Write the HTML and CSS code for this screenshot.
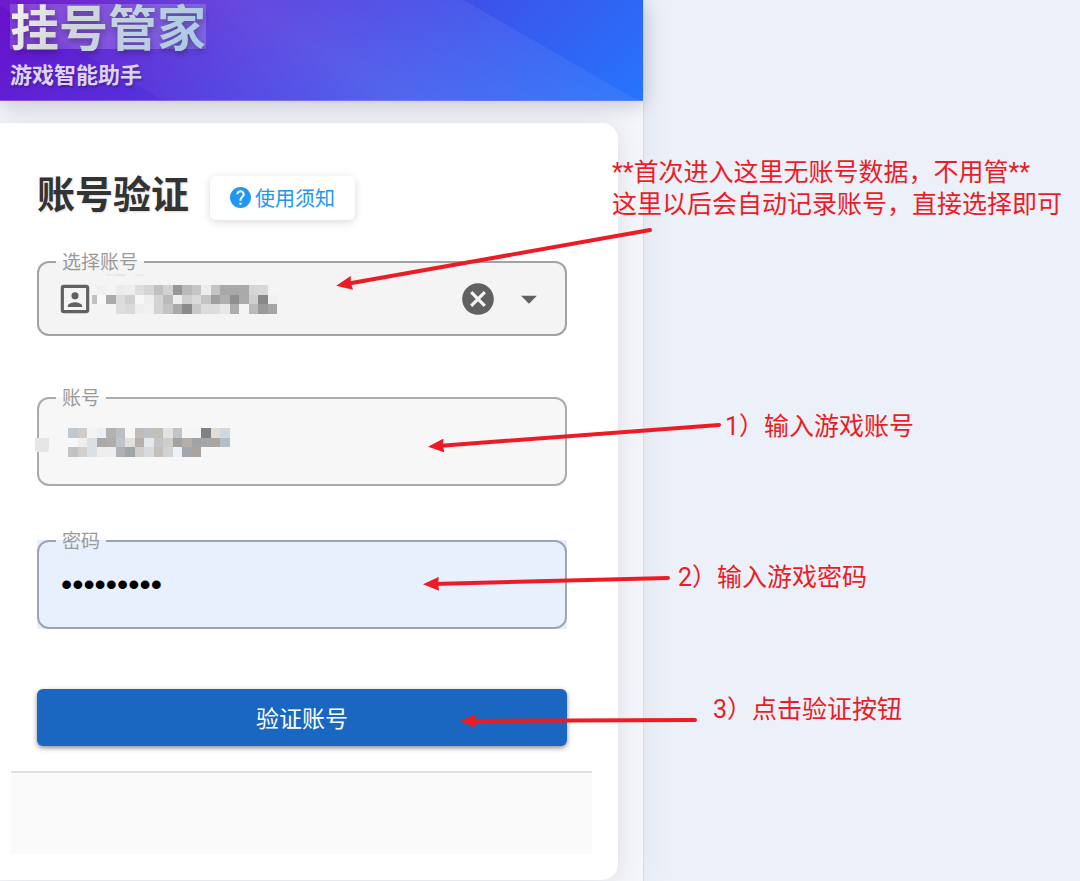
FILE: index.html
```html
<!DOCTYPE html>
<html lang="zh-CN">
<head>
    <meta charset="UTF-8">
    <meta name="viewport" content="width=device-width, initial-scale=1.0">
    <title>挂号管家</title>
    <link rel="stylesheet" href="styles.css">
</head>
<body>
    <div class="panel">
        <header class="header">
            <h1 class="brand"><span class="brand-text">挂号管家</span></h1>
            <p class="tagline">游戏智能助手</p>
        </header>

        <main class="card">
            <form class="form">
                <div class="title-row">
                    <h2 class="title">账号验证</h2>
                    <button type="button" class="notice">
                        <svg class="notice-icon" viewBox="0 0 20 20" aria-hidden="true">
                            <path fill="currentColor" d="M10 0C4.48 0 0 4.48 0 10s4.48 10 10 10 10-4.48 10-10S15.52 0 10 0zm1 17H9v-2h2v2zm2.07-7.75l-.9.92C11.45 10.9 11 11.5 11 13H9v-.5c0-1.1.45-2.1 1.17-2.83l1.24-1.26c.37-.36.59-.86.59-1.41 0-1.1-.9-2-2-2s-2 .9-2 2H6c0-2.21 1.79-4 4-4s4 1.79 4 4c0 .88-.36 1.68-.93 2.25z"/>
                        </svg>
                        使用须知
                    </button>
                </div>

                <div class="field field-select">
                    <label class="field-label" for="saved">选择账号</label>
                    <div class="field-box">
                        <svg class="icon" viewBox="0 0 24 24" aria-hidden="true">
                            <path fill="currentColor" d="M19 19H5V5h14m0-2H5a2 2 0 0 0-2 2v14a2 2 0 0 0 2 2h14a2 2 0 0 0 2-2V5a2 2 0 0 0-2-2m-2.500 13.250c0-1.500-3-2.250-4.500-2.250s-4.500.75-4.500 2.250V17h9M12 12.250A2.250 2.250 0 0 0 14.250 10 2.250 2.250 0 0 0 12 7.750 2.250 2.250 0 0 0 9.750 10 2.250 2.250 0 0 0 12 12.250"/>
                        </svg>
                        <select id="saved" class="control">
                            <option value=""></option>
                        </select>
                        <button type="button" class="clear" aria-label="清除">
                            <svg class="icon" viewBox="0 0 24 24" aria-hidden="true">
                                <path fill="currentColor" d="M12 2C6.470 2 2 6.470 2 12s4.470 10 10 10 10-4.470 10-10S17.530 2 12 2zm5 13.590L15.590 17 12 13.410 8.410 17 7 15.590 10.590 12 7 8.410 8.410 7 12 10.590 15.590 7 17 8.410 13.410 12 17 15.590z"/>
                            </svg>
                        </button>
                        <svg class="icon" viewBox="0 0 24 24" aria-hidden="true">
                            <path fill="currentColor" d="M7 10l5 5 5-5z"/>
                        </svg>
                    </div>
                    <svg class="mosaic mosaic-saved" viewBox="0 0 20 5" aria-hidden="true">
                        <rect x="0.5" y="3" width="0.5" height="1" fill="#c0c0c0"/>
                    </svg>
                </div>

                <div class="field field-account">
                    <label class="field-label" for="account">账号</label>
                    <div class="field-box">
                        <input id="account" class="control" type="text" autocomplete="off">
                    </div>
                    <svg class="mosaic mosaic-account" viewBox="0 0 21 3" aria-hidden="true">
                        <rect x="0.5" y="1" width="1.5" height="1.5" rx="0.3" fill="#e6e6e6"/>
                    </svg>
                </div>

                <div class="field field-password">
                    <label class="field-label" for="password">密码</label>
                    <div class="field-box">
                        <input id="password" class="control" type="password" value="abcdefghi" autocomplete="off">
                    </div>
                </div>

                <button type="button" class="submit">验证账号</button>
            </form>
            <div class="result"></div>
        </main>
    </div>

    <!-- guide arrows and notes on top of the page -->
    <div class="guide">
        <svg class="arrows" viewBox="0 0 1080 881" aria-hidden="true">
            <defs>
                <marker id="head" markerUnits="userSpaceOnUse" markerWidth="16" markerHeight="14" refX="6" refY="7" orient="auto">
                    <path d="M0 0L16 7L0 14L1 7z" fill="#ed1c24"/>
                </marker>
            </defs>
            <g stroke="#ed1c24" stroke-width="4" stroke-linecap="round">
                <line x1="650" y1="230" x2="346" y2="284" marker-end="url(#head)"/>
                <line x1="719" y1="425" x2="438" y2="446" marker-end="url(#head)"/>
                <line x1="668" y1="578" x2="433" y2="584" marker-end="url(#head)"/>
                <line x1="695" y1="720" x2="470" y2="721" marker-end="url(#head)"/>
            </g>
        </svg>
        <p class="note note-saved">**首次进入这里无账号数据，不用管**<br>这里以后会自动记录账号，直接选择即可</p>
        <p class="note note-account">1）输入游戏账号</p>
        <p class="note note-password">2）输入游戏密码</p>
        <p class="note note-submit">3）点击验证按钮</p>
    </div>

    <script>
        // one colour per cell, "-" leaves the cell empty
        const saved = [
            "- - ececec e4e4e4 - ebebeb - - - - - - - - - - - - - -",
            "- - - - - - - - - - - - - - - - - - - -",
            "- f0f0f0 - ebebeb eeeeee dddddd d5d5d5 c0c0c0 d2d2d2 979797 b9b9b9 c6c6c6 ededed c4c4c4 a8a8a8 a8a8a8 a9a9a9 d5d5d5 d8d8d8 -",
            "- f8f8f8 aaaaaa dbdbdb cfcfcf f7f7f7 eeeeee d3d3d3 bababa eeeeee cfcfcf dadada c4c4c4 a0a0a0 b0b0b0 8f8f8f ababab cfcfcf 888888 f0f0f0",
            "- - - dddddd dadada eeeeee f0f0f0 d3d3d3 c3c3c3 a9a9a9 8a8a8a c8c8c8 dcdcdc dddddd e8e8e8 adadad f4f4f4 bababa 999999 a5a5a5"
        ];
        const account = [
            "- - - - bfc7cf d0ccca f4f4f4 eaf0f8 b4b2af bcbec1 f4f6f7 c0bbb8 bcc2c5 c2beb8 e2e2e0 c2c4c6 f5f7f7 f5f5f5 808184 e2ddd8 cfd7df",
            "- - - - f8f8f8 f0eeed dae0e5 aaaaaa b0aeab c1c4c8 e3e1dc b5b0ac e4e8eb c3c5c8 cecdcb a2a2a2 b3aea9 a1a2a3 a6a7a8 aba5a0 b5bec8",
            "- - - - c3c3c2 d2d0ce dbe0e4 eeeeee eeeeee b0b1b5 a0a5a7 d0cfcd d9dadd c6c0bc d0d3d6 eef0f4 a1a7ad aaa49e - - -"
        ];

        function drawMosaic(selector, rows) {
            const svg = document.querySelector(selector);
            rows.forEach((row, y) => {
                row.split(" ").forEach((color, x) => {
                    if (color === "-") return;
                    const cell = document.createElementNS("http://www.w3.org/2000/svg", "rect");
                    cell.setAttribute("x", x);
                    cell.setAttribute("y", y);
                    cell.setAttribute("width", 1);
                    cell.setAttribute("height", 1);
                    cell.setAttribute("fill", "#" + color);
                    svg.appendChild(cell);
                });
            });
        }

        drawMosaic(".mosaic-saved", saved);
        drawMosaic(".mosaic-account", account);
    </script>
</body>
</html>
```
FILE: styles.css
```css
* {
    box-sizing: border-box;
}
body {
    margin: 0;
    min-height: 100vh;
    display: grid;
    grid-template-columns: 644fr 436fr;
    position: relative;
    overflow: hidden;
    background: #ecf0f9;
    font-family: "Noto Sans CJK SC", sans-serif;
}
h1, h2, p {
    margin: 0;
}
button, input, select {
    font-family: inherit;
}
.panel {
    background: #f4f6fb;
    border-right: 1px solid #d9dbe0;
    box-shadow: 0 0 32px rgba(0, 0, 0, 0.06);
}

/* header */
.header {
    padding: 4px 10px 12px;
    position: relative;
    background:
        linear-gradient(30deg, transparent 20%, rgba(255, 255, 255, 0.04) 20%, rgba(255, 255, 255, 0.11) 50%, rgba(255, 255, 255, 0.06) 78%, transparent 78%),
        linear-gradient(135deg, #6a11cb, #2575fc);
    border-bottom: 1px solid rgba(255, 255, 255, 0.2);
    box-shadow: 0 4px 20px rgba(0, 0, 0, 0.2);
}
.brand {
    width: fit-content;
    padding-bottom: 3px;
    font-size: 49px;
    line-height: 42px;
    background: rgba(255, 255, 255, 0.18);
}
.brand-text {
    color: transparent;
    background: linear-gradient(120deg, #f8f8f8, #d4d8d8 30%, #a4c8e6);
    -webkit-background-clip: text;
    background-clip: text;
    filter: drop-shadow(1px 3px 3px rgba(0, 0, 0, 0.3));
}
.tagline {
    margin-top: 9px;
    font-size: 22px;
    line-height: 30px;
    font-weight: bold;
    color: #dcd4f4;
    text-shadow: 1px 2px 2px rgba(0, 0, 0, 0.25);
}

/* card */
.card {
    margin: 22px 25px 0 0;
    padding-bottom: 26px;
    background: #fff;
    border-radius: 0 16px 16px 0;
    box-shadow: 0 2px 28px rgba(0, 0, 0, 0.1);
}
.form {
    padding: 44px 51px 25px 37px;
}
.title-row {
    display: flex;
    align-items: flex-end;
    gap: 21px;
    margin-bottom: 41px;
}
.title {
    padding-bottom: 4px;
    font-size: 38px;
    line-height: 49px;
    color: #333;
    text-shadow: 1px 1px 2px rgba(0, 0, 0, 0.15);
}
.notice {
    display: flex;
    align-items: center;
    gap: 4px;
    height: 44px;
    padding: 0 20px 1px;
    border: 0;
    border-radius: 6px;
    background: #fff;
    box-shadow: 0 2px 8px rgba(0, 0, 0, 0.15);
    color: #2196f3;
    font-size: 20px;
}
.notice-icon {
    width: 21px;
    height: 21px;
}

/* outlined fields */
.field {
    position: relative;
    color: #616161;
}
.field-box {
    display: flex;
    align-items: center;
    height: 89px;
    padding: 0 22px;
    border: 2px solid #ababab;
    border-radius: 12px;
    background: #f7f7f7;
}
.field-label {
    position: absolute;
    z-index: 1;
    top: -13px;
    left: 19px;
    padding: 0 6px;
    font-size: 19px;
    line-height: 26px;
    color: #9a9a9a;
    background: linear-gradient(#fff 50%, #f7f7f7 50%);
}
.control {
    flex: 1;
    min-width: 0;
    align-self: stretch;
    padding: 0;
    border: 0;
    outline: 0;
    appearance: none;
    background: transparent;
    color: #000;
    font-size: 24px;
}
.field-select .field-box {
    height: 75px;
    padding: 0 17px;
    gap: 13px;
    border-color: #a2a2a2;
    background: #f4f4f4;
}
.field-select .field-label {
    background: linear-gradient(#fff 50%, #f4f4f4 50%);
}
.icon {
    display: block;
    flex: none;
    width: 38px;
    height: 38px;
}
.clear {
    padding: 0;
    border: 0;
    background: none;
    color: inherit;
}
.field-account {
    margin-top: 61px;
}
.field-password {
    margin-top: 54px;
    background: #e8effd;
}
.field-password .field-box {
    border-color: #9fa5b0;
    background: none;
}
.field-password .field-label {
    background: linear-gradient(#fff 50%, #e8effd 50%);
}
.field-password .control {
    font-family: "Liberation Sans", sans-serif;
    font-size: 32px;
}
.mosaic {
    position: absolute;
    pointer-events: none;
    shape-rendering: crispEdges;
}
.mosaic-saved {
    left: 50px;
    top: 5px;
    width: 190px;
}
.mosaic-account {
    left: -7px;
    top: 31px;
    width: 200px;
}

.submit {
    display: block;
    width: 100%;
    height: 57px;
    margin-top: 60px;
    padding: 0 0 2px;
    border: 0;
    border-radius: 6px;
    background: #1967c0;
    box-shadow: 0 2px 5px rgba(0, 0, 0, 0.45);
    color: #fff;
    font-size: 23px;
}
.result {
    height: 83px;
    margin: 0 26px 0 11px;
    border-top: 2px solid #e0e0e0;
    background: #fafafa;
}

/* guide */
.guide {
    position: absolute;
    inset: 0;
    pointer-events: none;
}
.arrows {
    display: block;
    width: 100%;
}
.note {
    position: absolute;
    font-family: Roboto, "Noto Sans CJK SC", sans-serif;
    font-size: 25px;
    line-height: 32px;
    white-space: nowrap;
    color: #ed1c24;
}
.note-saved {
    left: 612px;
    top: 157px;
}
.note-account {
    left: 725px;
    top: 411px;
}
.note-password {
    left: 678px;
    top: 562px;
}
.note-submit {
    left: 713px;
    top: 694px;
}
```
